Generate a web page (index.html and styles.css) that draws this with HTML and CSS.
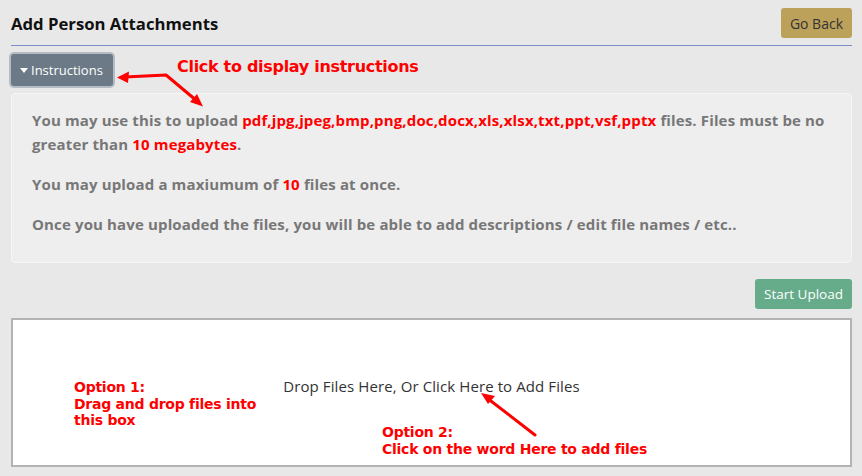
FILE: index.html
```html
<!DOCTYPE html>
<html lang="en">
<head>
  <meta charset="UTF-8">
  <title>Add Person Attachments</title>
  <link rel="stylesheet" href="styles.css">
</head>
<body>
  <div class="page">
    <div class="header">
      <h1 class="title">Add Person Attachments</h1>
      <button class="btn btn-back">Go Back</button>
    </div>

    <button class="btn btn-toggle"><span class="caret"></span>Instructions</button>

    <div class="panel">
      <p>You may use this to upload <span class="hl">pdf,jpg,jpeg,bmp,png,doc,docx,xls,xlsx,txt,ppt,vsf,pptx</span> files. Files must be no greater than <span class="hl">10 megabytes</span>.</p>
      <p>You may upload a maxiumum of <span class="hl">10</span> files at once.</p>
      <p>Once you have uploaded the files, you will be able to add descriptions / edit file names / etc..</p>
    </div>

    <div class="actions">
      <button class="btn btn-upload">Start Upload</button>
    </div>

    <div class="dropzone">
      <span>Drop Files Here, Or Click <a class="here">Here</a> to Add Files</span>
    </div>

    <!-- annotations drawn on top of the screenshot -->
    <div class="note note-toggle">Click to display instructions</div>
    <div class="note note-opt1">Option 1:<br>Drag and drop files into<br>this box</div>
    <div class="note note-opt2">Option 2:<br>Click on the word Here to add files</div>

    <svg class="arrows" width="862" height="476" viewBox="0 0 862 476">
      <g stroke="#ff0000" stroke-width="3" fill="none" stroke-linecap="round" stroke-linejoin="round">
        <polyline points="125,77 166,75 197,101"/>
        <line x1="535" y1="435" x2="487" y2="398"/>
      </g>
      <g fill="#ff0000">
        <polygon points="117,77.5 129,71.5 128,83"/>
        <polygon points="203,106.5 190,102 197,94"/>
        <polygon points="481,393 495,396 488,404"/>
      </g>
    </svg>
  </div>
</body>
</html>
```

FILE: styles.css
```css
body {
  margin: 0;
  padding: 0;
  background: #e8e8e8;
  font-family: "Open Sans", "Noto Sans", sans-serif;
  color: #333;
}

.page {
  position: relative;
  width: 862px;
  height: 476px;
  padding: 0 10px 0 11px;
  box-sizing: border-box;
  overflow: hidden;
}

.header {
  display: flex;
  justify-content: space-between;
  align-items: center;
  padding: 8px 0 7px;
  border-bottom: 1px solid #7b8fc6;
}

.title {
  margin: 0;
  font-size: 16.7px;
  font-weight: bold;
  color: #111;
}

.btn {
  border: 0;
  border-radius: 3px;
  font-family: inherit;
  font-size: 13px;
  cursor: pointer;
}

.btn-back {
  height: 30px;
  padding: 0 9px;
  background: #bca15b;
  color: #333;
  font-size: 14px;
}

.btn-toggle {
  display: flex;
  align-items: center;
  height: 32px;
  margin-top: 8px;
  padding: 0 10px 0 9px;
  background: #6b7a86;
  color: #fff;
  box-shadow: 0 0 0 2px #b3bcc5;
}

.caret {
  width: 0;
  height: 0;
  border-left: 4px solid transparent;
  border-right: 4px solid transparent;
  border-top: 5px solid #fff;
  margin-right: 3px;
}

.panel {
  margin-top: 7px;
  padding: 14px 20px 10px 20px;
  background: #eeeeee;
  border: 1px solid #f6f6f6;
  border-radius: 4px;
  color: #777;
  font-size: 15px;
  font-weight: bold;
  line-height: 24px;
  letter-spacing: 0.14px;
}

.panel p {
  margin: 0 0 16px;
}

.hl {
  color: #ff0000;
}

.actions {
  display: flex;
  justify-content: flex-end;
  margin-top: 16px;
}

.btn-upload {
  height: 30px;
  padding: 0 9px;
  background: #66ab8a;
  color: #fff;
  font-size: 13.5px;
}

.dropzone {
  margin-top: 9px;
  height: 149px;
  box-sizing: border-box;
  border: 2px solid #b3b3b3;
  background: #fff;
  text-align: center;
  padding-top: 56px;
  font-size: 15px;
  letter-spacing: 0.1px;
  color: #333;
}

.here {
  color: inherit;
  cursor: pointer;
}

.note {
  position: absolute;
  color: #ff0000;
  font-family: "DejaVu Sans", sans-serif;
  font-weight: bold;
  font-size: 14px;
  line-height: 16.5px;
  letter-spacing: -0.25px;
  white-space: nowrap;
}

.note-toggle {
  left: 177px;
  top: 59px;
  font-size: 16px;
  letter-spacing: -0.3px;
}

.note-opt1 {
  left: 74px;
  top: 379px;
}

.note-opt2 {
  left: 382px;
  top: 424px;
}

.arrows {
  position: absolute;
  left: 0;
  top: 0;
  pointer-events: none;
}
```
